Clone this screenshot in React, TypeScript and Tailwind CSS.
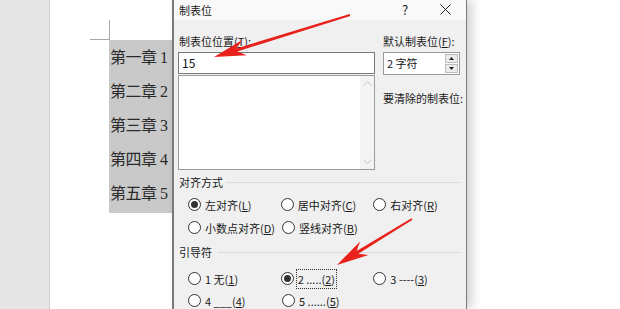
import React from 'react'

const ui = { fontFamily: '"Noto Sans CJK SC", "Noto Sans", sans-serif' }
const doc = { fontFamily: '"Liberation Serif", "Noto Sans CJK SC", serif' }

// red annotation arrow, tail -> tip
function arrowPoints(tx: number, ty: number, px: number, py: number) {
  const len = Math.hypot(px - tx, py - ty)
  const dx = (px - tx) / len
  const dy = (py - ty) / len
  const nx = -dy
  const ny = dx
  const L = 30
  const W = 8
  const s = 1.6
  const bx = px - dx * L
  const by = py - dy * L
  const pts = [
    [tx + nx * s * 0.6, ty + ny * s * 0.6],
    [bx + dx * 6 + nx * s, by + dy * 6 + ny * s],
    [bx - dx * 2 + nx * W, by - dy * 2 + ny * W],
    [px, py],
    [bx - dx * 2 - nx * W, by - dy * 2 - ny * W],
    [bx + dx * 6 - nx * s, by + dy * 6 - ny * s],
    [tx - nx * s * 0.6, ty - ny * s * 0.6],
  ]
  return pts.map((p) => p.join(',')).join(' ')
}

function Radio({ checked, label, focus }: { checked?: boolean; label: React.ReactNode; focus?: boolean }) {
  return (
    <div className="flex items-center w-[94px] h-[22px]">
      <span className="w-[13px] h-[13px] rounded-full border border-[#333] bg-white flex items-center justify-center shrink-0">
        {checked && <span className="w-[7px] h-[7px] rounded-full bg-[#333]" />}
      </span>
      <span
        className={
          'ml-[2px] px-[1px] leading-[18px] text-[11px] text-[#1a1a1a] whitespace-nowrap ' +
          (focus ? 'border border-dotted border-[#333]' : 'border border-transparent')
        }
      >
        {label}
      </span>
    </div>
  )
}

const U = ({ c }: { c: string }) => <span className="underline">{c}</span>

function Section({ title, lineOffset }: { title: string; lineOffset: string }) {
  return (
    <div className="flex items-center h-[18px] text-[11px] text-[#1a1a1a]">
      <span>{title}</span>
      <span className={'flex-1 h-px bg-[#dcdcdc] mr-[5px] ' + lineOffset} />
    </div>
  )
}

export default function App() {
  const chapters = ['第一章 1', '第二章 2', '第三章 3', '第四章 4', '第五章 5']

  return (
    <div className="relative w-[620px] h-[309px] overflow-hidden bg-white flex" style={ui}>
      {/* left gray gutter */}
      <div className="w-[50px] h-full bg-[#e6e6e6] border-r border-[#cfcfcf]" />

      {/* document page */}
      <div className="w-[122px] h-full bg-white">
        <div className="ml-[40px] mt-[20px] w-[20px] h-[20px] border-r border-b border-[#a8a8a8]" />
        <div className="ml-[59px] w-[63px] bg-[#c9c9c9] pt-[1px] pb-[2px]" style={doc}>
          {chapters.map((c) => (
            <div key={c} className="h-[34px] flex items-center pl-[1px] text-[16px] text-[#2a2a2a] whitespace-nowrap tracking-[-0.5px]">
              {c}
            </div>
          ))}
        </div>
      </div>

      {/* dialog */}
      <div className="w-[295px] h-full bg-[#f0f0f0] border-l-2 border-r border-[#7a7a7a] shadow-[5px_0_10px_rgba(0,0,0,0.18)] flex flex-col">
        <div className="h-[26px] bg-[#f9f9f9] flex items-center pl-[5px] text-[11px] text-[#1a1a1a]">
          <span>制表位</span>
          <span className="ml-auto w-[14px] text-center text-[13px]">?</span>
          <span className="ml-[26px] mr-[14px] w-[14px] flex justify-center">
            <svg width="11" height="11" viewBox="0 0 11 11">
              <path d="M0.5 0.5 L10.5 10.5 M10.5 0.5 L0.5 10.5" stroke="#222" strokeWidth="1" />
            </svg>
          </span>
        </div>

        <div className="flex pl-[4px] pt-[13px] gap-[8px]">
          <div className="w-[197px] flex flex-col">
            <div className="h-[18px] text-[11px] text-[#1a1a1a] flex items-center pl-[1px]">
              制表位位置(<U c="T" />):
            </div>
            <div className="h-[22px] mt-[1px] bg-white border border-[#7a7a7a] flex items-center pl-[3px] text-[12px] text-[#111]">
              15
            </div>
            <div className="h-[95px] mt-[1px] bg-white border border-[#9a9a9a] flex">
              <div className="flex-1" />
              <div className="w-[14px] bg-[#f4f4f4] flex flex-col items-center justify-between py-[5px]">
                <svg width="9" height="5" viewBox="0 0 9 5">
                  <path d="M0.5 4.5 L4.5 0.5 L8.5 4.5" stroke="#c2c2c2" fill="none" />
                </svg>
                <svg width="9" height="5" viewBox="0 0 9 5">
                  <path d="M0.5 0.5 L4.5 4.5 L8.5 0.5" stroke="#c2c2c2" fill="none" />
                </svg>
              </div>
            </div>
          </div>

          <div className="w-[77px] flex flex-col">
            <div className="h-[18px] text-[11px] text-[#1a1a1a] flex items-center whitespace-nowrap">
              默认制表位(<U c="F" />):
            </div>
            <div className="h-[23px] mt-[1px] bg-white border border-[#9a9a9a] flex items-center">
              <span className="flex-1 pl-[3px] text-[11px] text-[#111]">2 字符</span>
              <div className="w-[13px] mr-[1px] flex flex-col gap-[1px]">
                <div className="h-[9px] bg-[#ececec] border border-[#bdbdbd] flex items-center justify-center">
                  <svg width="5" height="3" viewBox="0 0 5 3"><path d="M0 3 L2.5 0 L5 3 Z" fill="#222" /></svg>
                </div>
                <div className="h-[9px] bg-[#ececec] border border-[#bdbdbd] flex items-center justify-center">
                  <svg width="5" height="3" viewBox="0 0 5 3"><path d="M0 0 L2.5 3 L5 0 Z" fill="#222" /></svg>
                </div>
              </div>
            </div>
            <div className="mt-[15px] h-[18px] text-[11px] text-[#1a1a1a] flex items-center whitespace-nowrap">
              要清除的制表位:
            </div>
          </div>
        </div>

        <div className="pl-[5px] mt-[4px]">
          <Section title="对齐方式" lineOffset="ml-[3px]" />
          <div className="pl-[9px] mt-[2px] flex">
            <Radio checked label={<>左对齐(<U c="L" />)</>} />
            <Radio label={<>居中对齐(<U c="C" />)</>} />
            <Radio label={<>右对齐(<U c="R" />)</>} />
          </div>
          <div className="pl-[9px] mt-[1px] flex">
            <Radio label={<>小数点对齐(<U c="D" />)</>} />
            <Radio label={<>竖线对齐(<U c="B" />)</>} />
          </div>

          <div className="mt-[5px]">
            <Section title="引导符" lineOffset="ml-[6px]" />
          </div>
          <div className="pl-[9px] mt-[6px] flex">
            <Radio label={<>1 无(<U c="1" />)</>} />
            <Radio checked focus label={<>2 .....(<U c="2" />)</>} />
            <Radio label={<>3 ----(<U c="3" />)</>} />
          </div>
          <div className="pl-[9px] flex">
            <Radio label={<>4 ___(<U c="4" />)</>} />
            <Radio label={<>5 ......(<U c="5" />)</>} />
          </div>
        </div>
      </div>

      {/* annotation arrows */}
      <svg className="absolute inset-0 pointer-events-none" width="620" height="309">
        <polygon points={arrowPoints(350, 15, 214, 57)} fill="#e8211b" />
        <polygon points={arrowPoints(412, 219, 337, 265)} fill="#e8211b" />
      </svg>
    </div>
  )
}
